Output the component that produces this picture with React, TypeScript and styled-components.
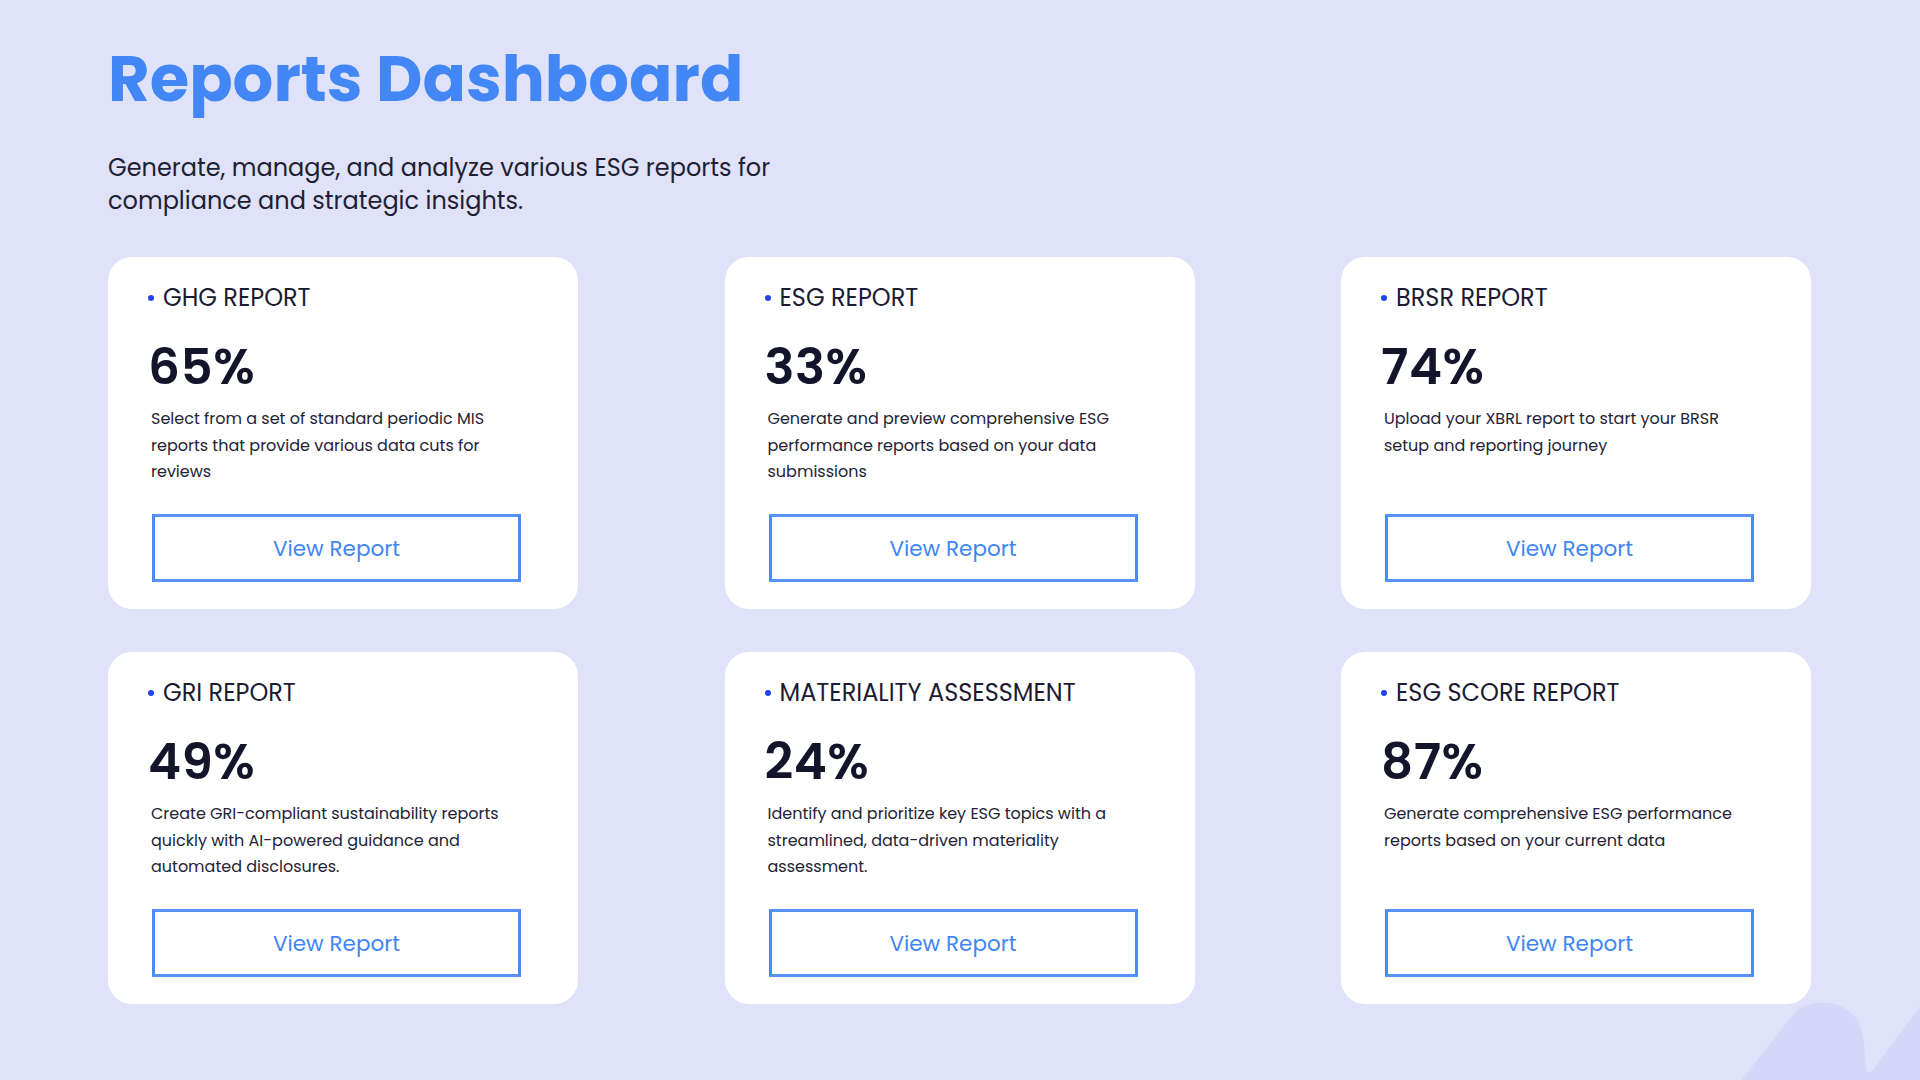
import React from "react";
import styled, { createGlobalStyle } from "styled-components";

const GlobalStyle = createGlobalStyle`
  *, *::before, *::after { box-sizing: border-box; }
  html, body { margin: 0; padding: 0; }
  body {
    background: #e0e2f9;
    font-family: Poppins, Inter, "Noto Sans", sans-serif;
    color: #1d1d35;
  }
`;

const Page = styled.main`
  position: relative;
  min-height: 1080px;
  overflow: hidden;
  padding: 41px 0 0 108px;
`;

const Title = styled.h1`
  margin: 0;
  font-size: 64px;
  line-height: 76px;
  font-weight: 700;
  color: #4287f5;
`;

const Intro = styled.p`
  margin: 34px 0 0;
  width: 680px;
  font-size: 24px;
  line-height: 33px;
  font-weight: 400;
  color: #1f1f33;
`;

const Grid = styled.section`
  margin-top: 40px;
  display: grid;
  grid-template-columns: repeat(3, 470px);
  grid-auto-rows: 352px;
  column-gap: 146.5px;
  row-gap: 43px;
`;

const Card = styled.article`
  display: flex;
  flex-direction: column;
  align-items: flex-start;
  background: #ffffff;
  border-radius: 24px;
  padding: 26px 42px 27px 42px;
`;

const Label = styled.h2`
  margin: 0 0 0 -2px;
  display: flex;
  align-items: center;
  gap: 9px;
  font-size: 24px;
  line-height: 30px;
  font-weight: 400;
  color: #1b1b33;

  &::before {
    content: "";
    width: 6px;
    height: 6px;
    border-radius: 50%;
    background: #1f45f2;
    flex: none;
  }
`;

const Percent = styled.div`
  margin: 24px 0 0 -2px;
  font-size: 50px;
  line-height: 60px;
  font-weight: 600;
  letter-spacing: 0.5px;
  color: #14142b;
`;

const Description = styled.p`
  margin: 9px 0 0 1px;
  max-width: 368px;
  font-size: 16px;
  line-height: 26.5px;
  font-weight: 400;
  color: #232336;
`;

const ViewButton = styled.button`
  margin-top: auto;
  margin-left: 2px;
  width: 369px;
  height: 68px;
  display: flex;
  align-items: center;
  justify-content: center;
  background: #ffffff;
  border: 3px solid #4a8af5;
  border-top-color: #5693f6;
  border-bottom-color: #5693f6;
  border-radius: 0;
  font-family: inherit;
  font-size: 21.5px;
  font-weight: 400;
  color: #3f86f4;
  cursor: pointer;
`;

const Blob = styled.svg`
  position: absolute;
  right: 0;
  bottom: 0;
  width: 180px;
  height: 80px;
  pointer-events: none;
`;

type Report = {
  name: string;
  percent: number;
  text: string;
};

const reports: Report[] = [
  {
    name: "GHG REPORT",
    percent: 65,
    text: "Select from a set of standard periodic MIS reports that provide various data cuts for reviews",
  },
  {
    name: "ESG REPORT",
    percent: 33,
    text: "Generate and preview comprehensive ESG performance reports based on your data submissions",
  },
  {
    name: "BRSR REPORT",
    percent: 74,
    text: "Upload your XBRL report to start your BRSR setup and reporting journey",
  },
  {
    name: "GRI REPORT",
    percent: 49,
    text: "Create GRI-compliant sustainability reports quickly with AI-powered guidance and automated disclosures.",
  },
  {
    name: "MATERIALITY ASSESSMENT",
    percent: 24,
    text: "Identify and prioritize key ESG topics with a streamlined, data-driven materiality assessment.",
  },
  {
    name: "ESG SCORE REPORT",
    percent: 87,
    text: "Generate comprehensive ESG performance reports based on your current data",
  },
];

export default function App() {
  return (
    <>
      <GlobalStyle />
      <Page>
        <Title>Reports Dashboard</Title>
        <Intro>
          Generate, manage, and analyze various ESG reports for compliance and strategic insights.
        </Intro>
        <Grid>
          {reports.map((r) => (
            <Card key={r.name}>
              <Label>{r.name}</Label>
              <Percent>{r.percent}%</Percent>
              <Description>{r.text}</Description>
              <ViewButton type="button">View Report</ViewButton>
            </Card>
          ))}
        </Grid>
        <Blob viewBox="0 0 180 80" aria-hidden="true">
          <path
            d="M1.7 80 L56 11 C64 4 74 2.5 85 2.7 C98 3 110 10 117 19 C123 29 125 45 125 60 L125.7 68 C126 72 129 74 133 70 L180 6.7 L180 80 Z"
            fill="#d4d7f8"
          />
        </Blob>
      </Page>
    </>
  );
}
